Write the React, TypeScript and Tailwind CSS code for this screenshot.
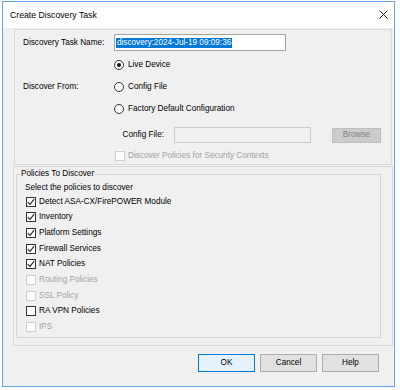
import type { ReactNode } from 'react'

const font = 'font-["Liberation_Sans",Arial,sans-serif]'

function Radio({ label, checked = false }: { label: string; checked?: boolean }) {
  return (
    <div className="flex h-[22px] items-center">
      <span className="flex h-[10px] w-[10px] items-center justify-center rounded-full border border-[#333333] bg-white">
        {checked && <span className="h-[4px] w-[4px] rounded-full bg-[#111111]" />}
      </span>
      <span className="ml-[4px]">{label}</span>
    </div>
  )
}

function CheckIcon() {
  return (
    <svg width="8" height="8" viewBox="0 0 8 8" fill="none">
      <path d="M0.8 4.2 L3 6.4 L7.2 1.2" stroke="#222222" strokeWidth="1.1" />
    </svg>
  )
}

function Check({ label, checked = false, disabled = false }: { label: string; checked?: boolean; disabled?: boolean }) {
  return (
    <div className="ml-[6px] flex h-[15.625px] items-center">
      <span
        className={`flex h-[10px] w-[10px] items-center justify-center border bg-white ${
          disabled ? 'border-[#cfcfcf]' : 'border-[#333333]'
        }`}
      >
        {checked && <CheckIcon />}
      </span>
      <span className={`ml-[3px] ${disabled ? 'text-[#a3a3a3]' : 'text-black'}`}>{label}</span>
    </div>
  )
}

function Button({ children, primary = false }: { children: ReactNode; primary?: boolean }) {
  return (
    <button
      className={`flex h-[18px] w-[57px] items-center justify-center border text-black ${
        primary ? 'border-[#0078d7] bg-[#e5f1fb]' : 'border-[#adadad] bg-[#e1e1e1]'
      }`}
    >
      {children}
    </button>
  )
}

const policies = [
  { label: 'Detect ASA-CX/FirePOWER Module', checked: true },
  { label: 'Inventory', checked: true },
  { label: 'Platform Settings', checked: true },
  { label: 'Firewall Services', checked: true },
  { label: 'NAT Policies', checked: true },
  { label: 'Routing Policies', disabled: true },
  { label: 'SSL Policy', disabled: true },
  { label: 'RA VPN Policies' },
  { label: 'IPS', disabled: true }
]

export default function App() {
  return (
    <div className={`h-[390px] w-[400px] bg-white pl-[2px] pt-[1px] text-[8.2px] leading-[10px] text-black ${font}`}>
      <div className="flex h-[386px] w-[393px] flex-col border border-[#62a6ea] bg-[#f0f0f0]">
        <div className="flex h-[26px] shrink-0 items-center justify-between bg-white pb-[1px] pl-[7px] pr-[6px]">
          <span className="text-[8.7px]">Create Discovery Task</span>
          <svg width="9" height="9" viewBox="0 0 9 9" fill="none">
            <path d="M0.5 0.5 L8.5 8.5 M8.5 0.5 L0.5 8.5" stroke="#222222" strokeWidth="1" />
          </svg>
        </div>

        <div className="ml-[11px] mr-[2px] mt-[1px] h-[136px] border border-[#dadada] pt-[4px]">
          <div className="grid grid-cols-[91px_1fr] pl-[8px]">
            <div className="flex h-[17px] items-center">Discovery Task Name:</div>
            <div className="flex h-[17px] w-[172px] items-center border border-[#a5a5a5] bg-white pl-[1px]">
              <span className="bg-[#0078d7] px-[1px] text-white">discovery:2024-Jul-19 09:09:36</span>
            </div>

            <div className="row-span-3 mt-[3px] flex items-center">Discover From:</div>
            <div className="mt-[3px]">
              <Radio label="Live Device" checked />
            </div>
            <Radio label="Config File" />
            <Radio label="Factory Default Configuration" />

            <div />
            <div className="mt-[7px] flex h-[16px] items-center">
              <span className="w-[50px] text-right">Config File:</span>
              <span className="ml-[10px] h-[16px] w-[137px] border border-[#cccccc] bg-[#f0f0f0]" />
              <span className="ml-[21px] flex h-[15px] w-[49px] items-center justify-center border border-[#bfbfbf] bg-[#cccccc] text-[#838383]">
                Browse
              </span>
            </div>

            <div />
            <div className="mt-[5px] flex h-[16px] items-center pl-[1px]">
              <span className="h-[10px] w-[10px] border border-[#cfcfcf] bg-white" />
              <span className="ml-[3px] text-[#a3a3a3]">Discover Policies for Security Contexts</span>
            </div>
          </div>
        </div>

        <div className="ml-[10px] mr-[1px] mt-[1px] border border-[#dadada] pb-[7px] pt-[2px]">
          <fieldset className="ml-[2px] h-[169px] w-[365px] border border-[#d6d6d6] pb-[2px] pl-[3px]">
            <legend className="px-[1px] leading-[10px]">Policies To Discover</legend>
            <div className="ml-[5px] mt-[2px] flex h-[13px] items-center">Select the policies to discover</div>
            {policies.map((p) => (
              <Check key={p.label} label={p.label} checked={p.checked} disabled={p.disabled} />
            ))}
          </fieldset>
        </div>

        <div className="mt-[8px] flex justify-end gap-[5px] pr-[15px]">
          <Button primary>OK</Button>
          <Button>Cancel</Button>
          <Button>Help</Button>
        </div>
      </div>
    </div>
  )
}
